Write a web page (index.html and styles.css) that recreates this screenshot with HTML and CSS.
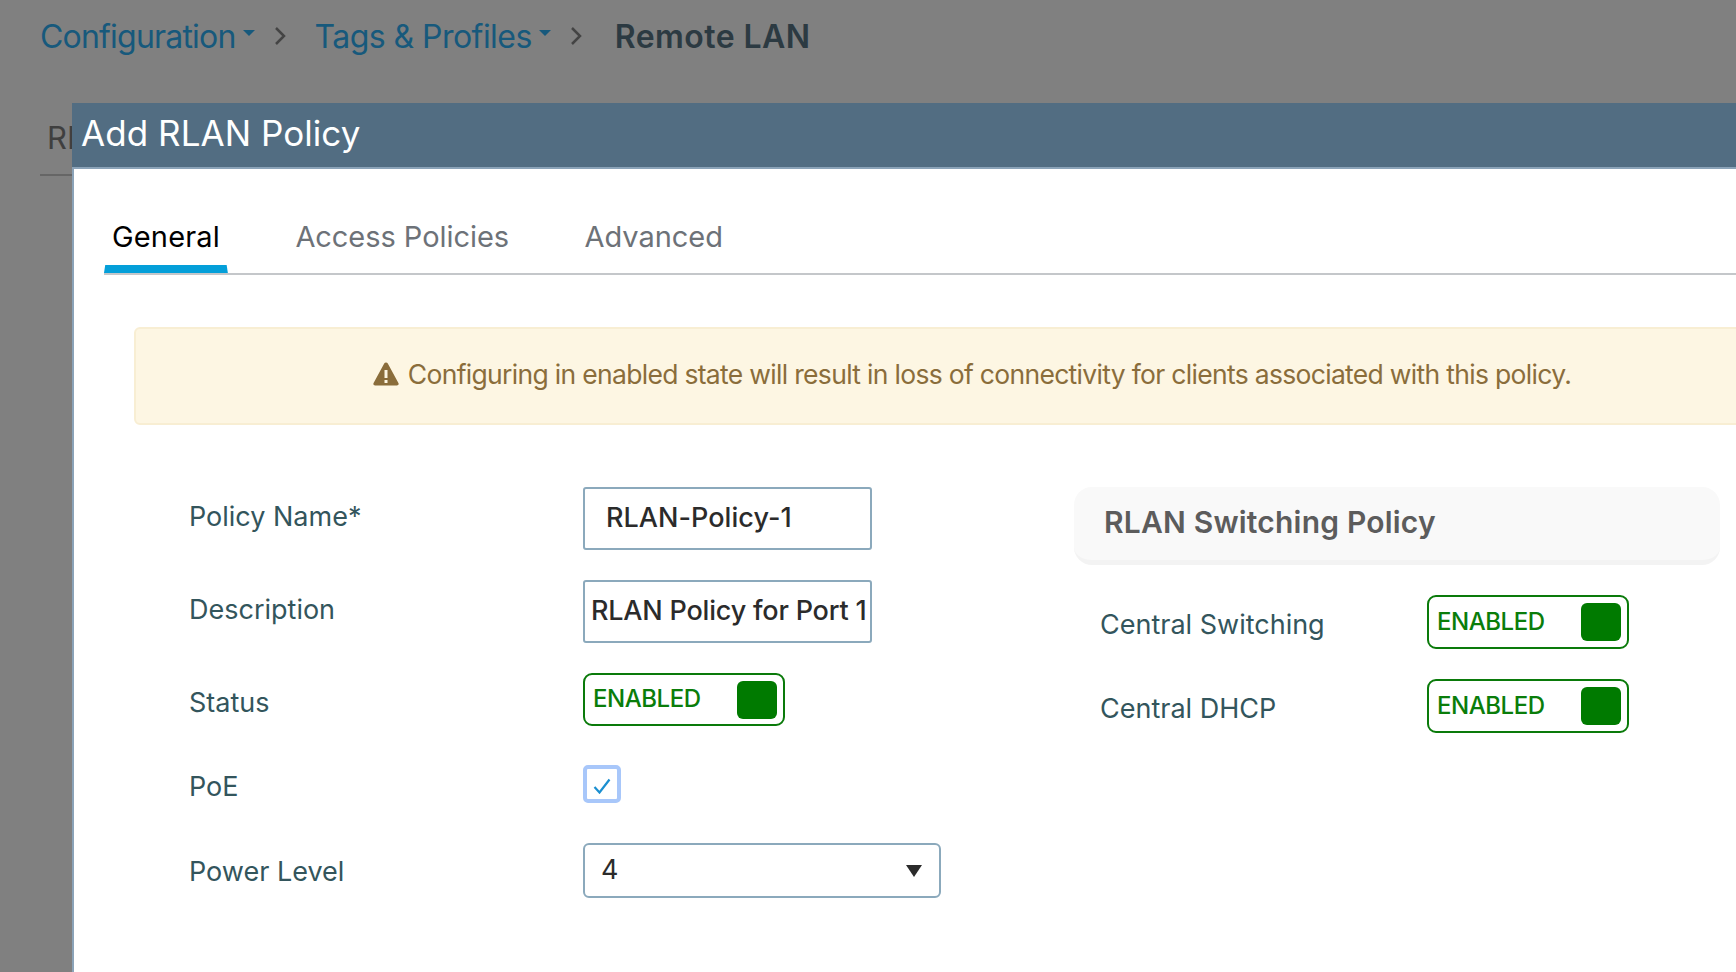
FILE: index.html
```html
<!DOCTYPE html>
<html lang="en">
<head>
<meta charset="utf-8">
<title>Add RLAN Policy</title>
<link rel="stylesheet" href="styles.css">
</head>
<body>
<nav class="crumbs">
  <a class="crumb crumb-config">Configuration<i class="caret"></i></a>
  <svg class="chev" viewBox="0 0 12 20"><path d="M2 2l8 8-8 8" /></svg>
  <a class="crumb">Tags &amp; Profiles<i class="caret"></i></a>
  <svg class="chev chev-last" viewBox="0 0 12 20"><path d="M2 2l8 8-8 8" /></svg>
  <span class="crumb-current">Remote LAN</span>
</nav>
<div class="page-tabs"><span class="page-tab">RLAN</span></div>

<section class="modal">
  <header class="modal-head">Add RLAN Policy</header>
  <div class="modal-body">
    <div class="tabs">
      <span class="tab tab-active">General</span>
      <span class="tab">Access Policies</span>
      <span class="tab">Advanced</span>
    </div>
    <div class="alert">
      <svg class="warn" viewBox="0 0 26 24"><path fill-rule="evenodd" d="M13 .5c.8 0 1.400.4 1.800 1.100l10.600 19.300c.7 1.300-.1 2.700-1.600 2.700H2.200C.7 23.600-.1 22.200.6 20.900L11.200 1.600C11.600.9 12.200.5 13 .5zM11.500 8v8h3V8h-3zm0 10v3h3v-3h-3z"/></svg>
      <span>Configuring in enabled state will result in loss of connectivity for clients associated with this policy.</span>
    </div>
    <div class="columns">
      <div class="form">
        <div class="row row-name">
          <label class="lbl lbl-up">Policy Name*</label>
          <div class="input input-name">RLAN-Policy-1</div>
        </div>
        <div class="row row-desc">
          <label class="lbl lbl-up">Description</label>
          <div class="input input-desc">RLAN Policy for Port 1</div>
        </div>
        <div class="row row-status">
          <label class="lbl lbl-down">Status</label>
          <div class="toggle"><span>ENABLED</span><i class="knob"></i></div>
        </div>
        <div class="row row-poe">
          <label class="lbl lbl-down">PoE</label>
          <div class="check"><svg viewBox="0 0 18 16"><path d="M1.500 9l5 5.500L16.500 1.500"/></svg></div>
        </div>
        <div class="row row-power">
          <label class="lbl lbl-low">Power Level</label>
          <div class="select"><span>4</span><i class="select-arrow"></i></div>
        </div>
      </div>
      <div class="side">
        <h3 class="side-title">RLAN Switching Policy</h3>
        <div class="side-rows">
          <label class="lbl lbl-down">Central Switching</label>
          <div class="toggle toggle-tall"><span>ENABLED</span><i class="knob"></i></div>
          <label class="lbl lbl-down">Central DHCP</label>
          <div class="toggle toggle-tall"><span>ENABLED</span><i class="knob"></i></div>
        </div>
      </div>
    </div>
  </div>
</section>
</body>
</html>
```
FILE: styles.css
```css
* { box-sizing: border-box; }
html, body { height: 100%; }
body {
  margin: 0;
  background: #808080;
  overflow: hidden;
  font-family: Inter, "Liberation Sans", sans-serif;
  position: relative;
}
.crumbs {
  display: flex;
  align-items: center;
  height: 72px;
  padding-left: 40px;
  font-size: 32px;
}
.crumb {
  color: #17597c;
  display: flex;
  align-items: center;
  white-space: nowrap;
  letter-spacing: -0.55px;
}
.crumb-config { letter-spacing: -0.8px; }
.caret {
  width: 0; height: 0;
  margin: -6px 0 0 7px;
  border-left: 6.500px solid transparent;
  border-right: 6.500px solid transparent;
  border-top: 6.500px solid #17597c;
}
.chev { width: 12px; height: 20px; margin: 0 29px 0 19px; }
.chev-last { margin-right: 33px; }
.chev path { fill: none; stroke: #444; stroke-width: 2.5; }
.crumb-current { color: #2c3a42; font-weight: 600; white-space: nowrap; letter-spacing: 0.45px; }
.page-tabs {
  margin: 30px 0 0 40px;
  width: 32px;
  height: 74px;
  border-bottom: 2px solid #666;
  font-size: 31px;
  color: #3f3f3f;
  padding: 17px 0 0 7px;
}
.modal {
  position: absolute;
  left: 72px;
  top: 103px;
  width: 1738px;
  height: 880px;
  background: #fff;
  border-left: 2px solid #8ba3b8;
}
.modal-head {
  height: 66px;
  margin-left: -2px;
  background: #526d82;
  border-bottom: 2px solid #8ba3b8;
  color: #fff;
  font-size: 35px;
  letter-spacing: 0.05px;
  line-height: 60px;
  padding-left: 9px;
}
.modal-body { padding: 0 0 0 30px; }
.tabs {
  display: flex;
  height: 106px;
  border-bottom: 2px solid #c4c7ca;
  align-items: flex-end;
  font-size: 29px;
  letter-spacing: -0.05px;
}
.tab {
  color: #6d7278;
  padding: 0 8px;
  margin-right: 59.500px;
  height: 54px;
}
.tab-active {
  color: #000;
  letter-spacing: 0.15px;
  position: relative;
}
.tab-active::after {
  content: "";
  position: absolute;
  left: 0; right: 0; bottom: 0;
  height: 8px;
  background: #049fd9;
  clip-path: polygon(1% 0, 99% 0, 100% 100%, 0 100%);
}
.alert {
  display: flex;
  align-items: center;
  justify-content: center;
  gap: 9px;
  margin: 52px 0 0 30px;
  height: 98px;
  padding-bottom: 4px;
  background: #fdf6e3;
  border: 2px solid #f8eed3;
  border-radius: 6px;
  color: #8a6d3b;
  font-size: 26.500px;
  letter-spacing: -0.69px;
  white-space: nowrap;
}
.warn { width: 26px; height: 24px; fill: #8a6d3b; flex: none; }
.columns { display: flex; margin-top: 62px; }
.form {
  display: flex;
  flex-direction: column;
  margin-left: 85px;
  width: 885px;
  flex: none;
}
.row { display: flex; align-items: center; }
.row-desc, .row-status { margin-top: 30px; }
.row-poe { margin-top: 39px; }
.row-power { margin-top: 40px; }
.row .lbl { width: 394px; flex: none; }
.lbl { color: #33555c; font-size: 27px; white-space: nowrap; }
.lbl-up { padding-bottom: 4px; }
.lbl-down { padding-top: 5px; }
.lbl-low { padding-top: 1px; }
.input {
  height: 63px;
  width: 289px;
  border: 2px solid #8ba9bc;
  border-radius: 3px;
  color: #2b2b2b;
  font-size: 27px;
  font-weight: 500;
  display: flex;
  align-items: center;
  white-space: nowrap;
  padding-bottom: 3px;
}
.input-name { padding-left: 21px; letter-spacing: 0.05px; }
.input-desc { padding-left: 6px; letter-spacing: -0.2px; }
.toggle {
  width: 202px;
  height: 53px;
  border: 2px solid #0a7a0a;
  border-radius: 9px;
  display: flex;
  align-items: center;
  justify-content: space-between;
  padding: 0 6px 0 8px;
  color: #0a7d0a;
  font-size: 24px;
  font-weight: 450;
  letter-spacing: -0.45px;
}
.toggle span { padding-bottom: 2px; }
.toggle-tall { height: 54px; }
.knob { width: 40px; height: 38px; border-radius: 6px; background: #007a00; }
.check {
  width: 38px;
  height: 38px;
  border: 4px solid #a8c7fa;
  border-radius: 5px;
  padding: 9px 6px 6px 6px;
}
.check svg { display: block; width: 18px; height: 16px; fill: none; stroke: #1b8fd0; stroke-width: 2.2; }
.select {
  width: 358px;
  height: 55px;
  border: 2px solid #8ba9bc;
  border-radius: 6px;
  color: #2b2b2b;
  font-size: 27px;
  display: flex;
  align-items: center;
  justify-content: space-between;
  padding: 0 17px 0 16px;
}
.select span { padding-bottom: 3px; }
.select-arrow {
  width: 0; height: 0;
  border-left: 8px solid transparent;
  border-right: 8px solid transparent;
  border-top: 12px solid #2b2b2b;
}
.side { width: 646px; flex: none; }
.side-title {
  margin: 0;
  height: 78px;
  background: #f9f9f9;
  border-radius: 18px;
  border-bottom: 5px solid #f3f3f3;
  color: #5c5c5c;
  font-size: 30px;
  font-weight: 600;
  letter-spacing: 0.2px;
  padding: 17px 0 0 30px;
}
.side-rows {
  display: grid;
  grid-template-columns: 327px 202px;
  grid-template-rows: 54px 54px;
  row-gap: 30px;
  margin: 30px 0 0 26px;
  align-items: center;
}
```
